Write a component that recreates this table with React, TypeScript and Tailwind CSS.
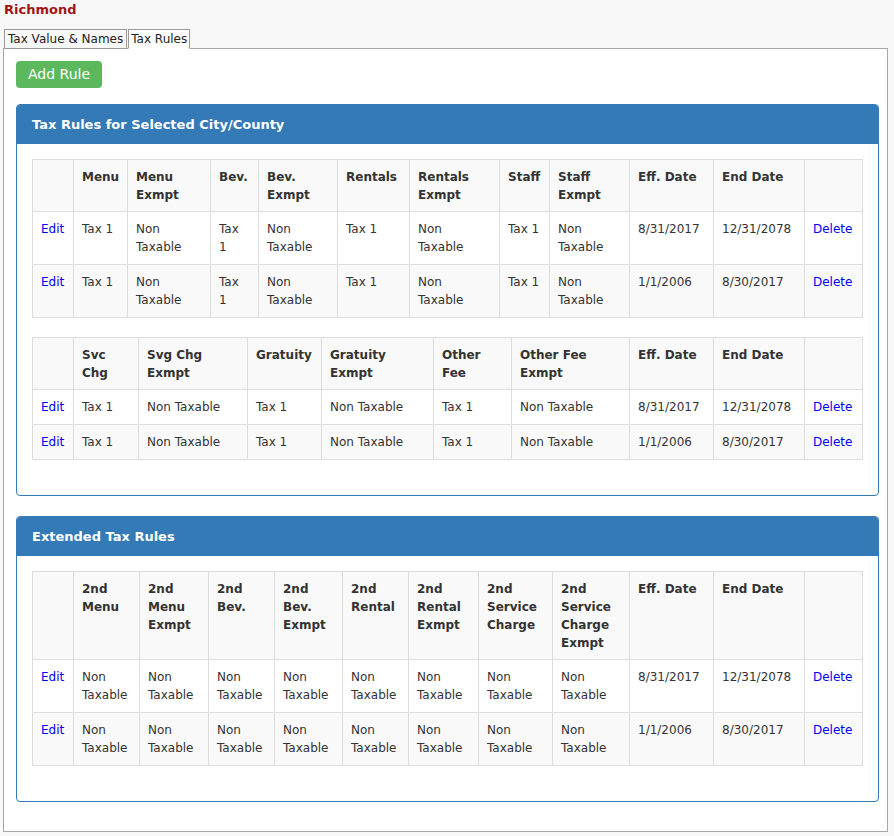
import React from 'react';

type Row = string[];

const NT = 'Non Taxable';

const table1Head = ['', 'Menu', 'Menu Exmpt', 'Bev.', 'Bev. Exmpt', 'Rentals', 'Rentals Exmpt', 'Staff', 'Staff Exmpt', 'Eff. Date', 'End Date', ''];
const table1Widths = [41, 54, 83, 48, 79, 72, 90, 50, 80, 84, 91, 58];
const table1Rows: Row[] = [
    ['Edit', 'Tax 1', NT, 'Tax 1', NT, 'Tax 1', NT, 'Tax 1', NT, '8/31/2017', '12/31/2078', 'Delete'],
    ['Edit', 'Tax 1', NT, 'Tax 1', NT, 'Tax 1', NT, 'Tax 1', NT, '1/1/2006', '8/30/2017', 'Delete'],
];

const table2Head = ['', 'Svc Chg', 'Svg Chg Exmpt', 'Gratuity', 'Gratuity Exmpt', 'Other Fee', 'Other Fee Exmpt', 'Eff. Date', 'End Date', ''];
const table2Widths = [41, 65, 109, 74, 112, 78, 118, 84, 91, 58];
const table2Rows: Row[] = [
    ['Edit', 'Tax 1', NT, 'Tax 1', NT, 'Tax 1', NT, '8/31/2017', '12/31/2078', 'Delete'],
    ['Edit', 'Tax 1', NT, 'Tax 1', NT, 'Tax 1', NT, '1/1/2006', '8/30/2017', 'Delete'],
];

const table3Head = ['', '2nd Menu', '2nd Menu Exmpt', '2nd Bev.', '2nd Bev. Exmpt', '2nd Rental', '2nd Rental Exmpt', '2nd Service Charge', '2nd Service Charge Exmpt', 'Eff. Date', 'End Date', ''];
const table3Widths = [41, 66, 69, 66, 68, 66, 70, 74, 77, 84, 91, 58];
const table3Rows: Row[] = [
    ['Edit', NT, NT, NT, NT, NT, NT, NT, NT, '8/31/2017', '12/31/2078', 'Delete'],
    ['Edit', NT, NT, NT, NT, NT, NT, NT, NT, '1/1/2006', '8/30/2017', 'Delete'],
];

const RulesTable: React.FC<{ head: string[]; widths: number[]; rows: Row[]; last?: boolean }> = ({ head, widths, rows, last }) => (
    <table className={`w-[830px] table-fixed border-collapse ${last ? 'mb-0' : 'mb-[19px]'}`}>
        <colgroup>
            {widths.map((w, i) => (
                <col key={i} style={{ width: w }} />
            ))}
        </colgroup>
        <thead>
            <tr className="bg-[#f9f9f9]">
                {head.map((h, i) => (
                    <th key={i} className="border border-[#dddddd] px-2 pb-[7px] pt-2 text-left align-top font-bold text-[#333333]">
                        {h}
                    </th>
                ))}
            </tr>
        </thead>
        <tbody>
            {rows.map((r, ri) => (
                <tr key={ri} className={ri % 2 === 1 ? 'bg-[#f9f9f9]' : 'bg-white'}>
                    {r.map((c, ci) => (
                        <td key={ci} className="border border-[#dddddd] p-2 align-top">
                            {c === 'Edit' || c === 'Delete' ? (
                                <a href="#" className="text-[#0000ee]">{c}</a>
                            ) : (
                                c
                            )}
                        </td>
                    ))}
                </tr>
            ))}
        </tbody>
    </table>
);

const Panel: React.FC<{ title: string; children: React.ReactNode }> = ({ title, children }) => (
    <div className="mb-5 rounded border border-[#337ab7] bg-white">
        <div className="rounded-t-[3px] bg-[#337ab7] px-[15px] py-[10px] text-[13px] font-bold leading-[19px] text-white">
            {title}
        </div>
        <div className="p-[15px] pb-[16px]">{children}</div>
    </div>
);

export default function App() {
    return (
        <div
            className="min-h-[836px] bg-[#f8f8f8] px-[3px] pt-[1px] text-[12px] leading-[18px] text-[#333333]"
            style={{ fontFamily: '"DejaVu Sans", Verdana, sans-serif' }}
        >
            <div className="px-[1px] text-[13px] font-bold leading-[18px] text-[#a31515]">Richmond</div>
            <div className="mt-[10px] flex pl-[1px]">
                <div className="relative z-10 -mb-px border border-[#9a9a9a] bg-[#f8f8f8] px-[3px] leading-[18px] text-[#222]">
                    Tax Value &amp; Names
                </div>
                <div className="relative z-10 -mb-px ml-px border border-b-white border-[#9a9a9a] bg-white px-[2px] leading-[18px] text-[#222]">
                    Tax Rules
                </div>
            </div>
            <div className="w-[885px] border border-[#a6a6a6] bg-white pb-[9px] pl-[12px] pr-[8px] pt-[12px]">
                <button className="mb-4 h-[27px] rounded bg-[#5cb85c] px-3 text-[14px] leading-[19px] text-white">
                    Add Rule
                </button>
                <Panel title="Tax Rules for Selected City/County">
                    <RulesTable head={table1Head} widths={table1Widths} rows={table1Rows} />
                    <RulesTable head={table2Head} widths={table2Widths} rows={table2Rows} />
                </Panel>
                <Panel title="Extended Tax Rules">
                    <RulesTable head={table3Head} widths={table3Widths} rows={table3Rows} />
                </Panel>
            </div>
        </div>
    );
}
